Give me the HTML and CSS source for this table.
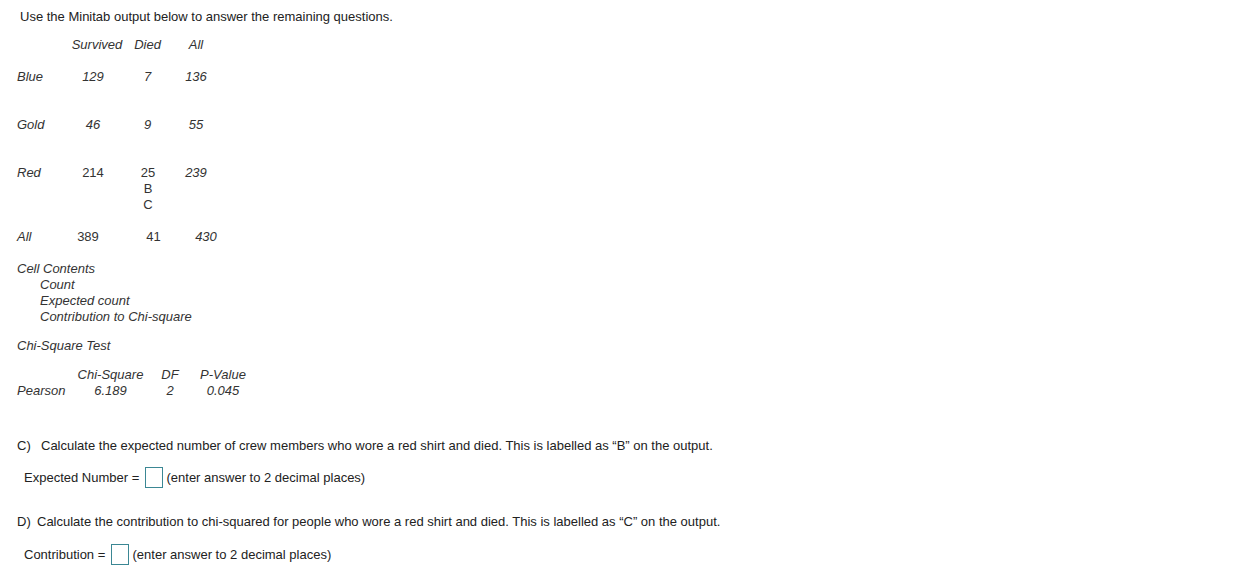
FILE: index.html
```html
<!DOCTYPE html>
<html lang="en">
<head>
  <meta charset="UTF-8">
  <title>Minitab Chi-Square Question</title>
  <meta name="viewport" content="width=device-width, initial-scale=1.0">
  <link rel="stylesheet" href="styles.css">
</head>
<body>
  <div class="page">
    <p class="intro">Use the Minitab output below to answer the remaining questions.</p>

    <div class="output">
      <div class="tally">
        <div class="row head">
          <span></span>
          <span class="c shift-r4">Survived</span>
          <span class="c">Died</span>
          <span class="c">All</span>
        </div>

        <div class="row block">
          <span>Blue</span>
          <span class="c">129</span>
          <span class="c">7</span>
          <span class="c">136</span>
        </div>

        <div class="row block">
          <span>Gold</span>
          <span class="c">46</span>
          <span class="c">9</span>
          <span class="c">55</span>
        </div>

        <div class="row block tall">
          <span>Red</span>
          <span class="c up">214</span>
          <span class="c up stack">25<br>B<br>C</span>
          <span class="c">239</span>
        </div>

        <div class="row">
          <span>All</span>
          <span class="c up shift-l5">389</span>
          <span class="c up shift-r6">41</span>
          <span class="c shift-r10">430</span>
        </div>
      </div>

      <div class="legend">
        <div>Cell Contents</div>
        <div class="indent">Count</div>
        <div class="indent">Expected count</div>
        <div class="indent">Contribution to Chi-square</div>
      </div>

      <div class="test-title">Chi-Square Test</div>

      <div class="test">
        <span></span>
        <span class="c">Chi-Square</span>
        <span class="c">DF</span>
        <span class="c">P-Value</span>
        <span>Pearson</span>
        <span class="c">6.189</span>
        <span class="c">2</span>
        <span class="c">0.045</span>
      </div>
    </div>

    <div class="question q-c">
      <p class="prompt"><span class="letter">C)</span>Calculate the expected number of crew members who wore a red shirt and died. This is labelled as “B” on the output.</p>
      <p class="answer">Expected Number = <input type="text" class="box" aria-label="Expected Number"> (enter answer to 2 decimal places)</p>
    </div>

    <div class="question q-d">
      <p class="prompt"><span class="letter tight">D)</span>Calculate the contribution to chi-squared for people who wore a red shirt and died. This is labelled as “C” on the output.</p>
      <p class="answer">Contribution = <input type="text" class="box" aria-label="Contribution"> (enter answer to 2 decimal places)</p>
    </div>
  </div>
</body>
</html>
```

FILE: styles.css
```css
* {
  box-sizing: border-box;
}

body {
  margin: 0;
  padding: 0;
  background: #fff;
  color: #222;
  font-family: 'Liberation Sans', Arial, sans-serif;
  font-size: 13px;
}

.page {
  padding: 9px 0 0 17px;
}

p {
  margin: 0;
}

.intro {
  line-height: 16px;
  padding-left: 3px;
}

/* minitab output block */

.output {
  color: #333;
  font-style: italic;
  line-height: 16px;
  margin-top: 12px;
}

.tally .row {
  display: grid;
  grid-template-columns: 48px 56px 53px 44px;
}

.tally .head {
  margin-bottom: 16px;
}

.tally .block {
  height: 48px;
}

.tally .tall {
  height: 64px;
}

.c {
  text-align: center;
}

.up {
  font-style: normal;
}

.stack {
  padding-left: 1px;
}

.shift-r4 { position: relative; left: 4px; }
.shift-r6 { position: relative; left: 6px; }
.shift-r10 { position: relative; left: 10px; }
.shift-l5 { position: relative; left: -5px; }

.legend {
  margin-top: 16px;
}

.legend .indent {
  padding-left: 23px;
}

.test-title {
  margin-top: 13px;
}

.test {
  display: grid;
  grid-template-columns: 59px 69px 50px 56px;
  margin-top: 13px;
}

/* questions */

.question .prompt {
  line-height: 16px;
}

.q-c {
  margin-top: 39px;
}

.q-d {
  margin-top: 26px;
}

.letter {
  display: inline-block;
  width: 24px;
}

.letter.tight {
  width: 20px;
}

.answer {
  padding-left: 7px;
  margin-top: 13px;
  line-height: 21px;
  height: 21px;
}

.q-d .answer {
  margin-top: 14px;
}

.box {
  display: inline-block;
  width: 18px;
  height: 21px;
  padding: 0;
  margin: 0 0 0 2px;
  border: 1px solid #3b8794;
  border-radius: 0;
  vertical-align: top;
  background: #fff;
  font-size: 13px;
}
```
